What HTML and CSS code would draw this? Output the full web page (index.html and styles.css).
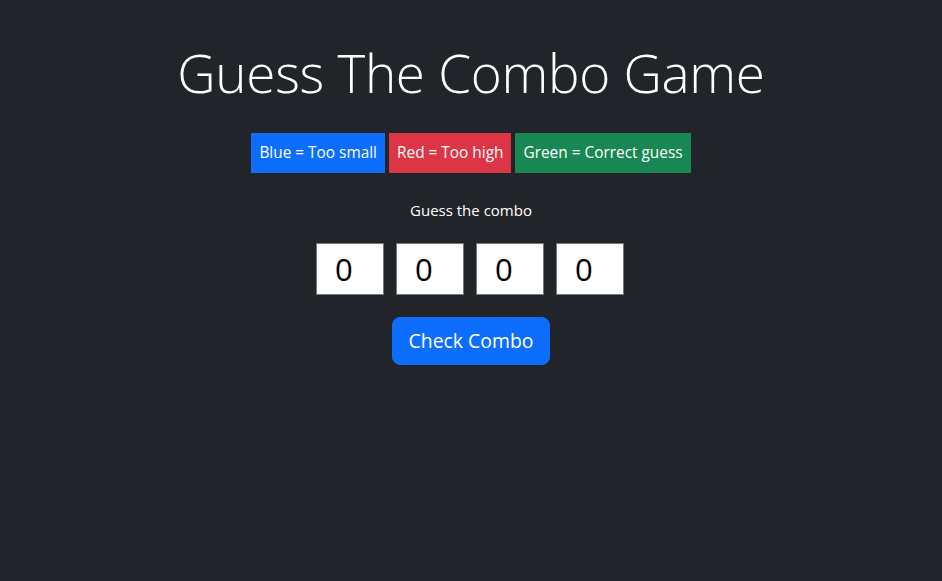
FILE: index.html
```html
<!DOCTYPE html>
<html lang="en">
<head>
<meta charset="utf-8">
<title>Guess The Combo Game</title>
<link rel="stylesheet" href="styles.css">
</head>
<body>
<main class="game">
  <h1 class="title">Guess The Combo Game</h1>
  <div class="legend">
    <span class="badge badge-blue">Blue = Too small</span>
    <span class="badge badge-red">Red = Too high</span>
    <span class="badge badge-green">Green = Correct guess</span>
  </div>
  <p class="prompt">Guess the combo</p>
  <div class="digits">
    <input class="digit" type="text" value="0">
    <input class="digit" type="text" value="0">
    <input class="digit" type="text" value="0">
    <input class="digit" type="text" value="0">
  </div>
  <button class="check" type="button">Check Combo</button>
</main>
</body>
</html>
```

FILE: styles.css
```css
* { box-sizing: border-box; }
html, body {
  margin: 0;
  height: 100%;
  background: #212529;
}
body {
  font-family: "Open Sans", "Noto Sans", sans-serif;
  color: #fff;
}
.game {
  display: flex;
  flex-direction: column;
  align-items: center;
  padding-top: 39px;
}
.title {
  margin: 0;
  font-size: 53px;
  font-weight: 300;
  letter-spacing: -0.3px;
  line-height: 67px;
}
.legend {
  display: flex;
  gap: 4px;
  margin-top: 27px;
}
.badge {
  display: block;
  padding: 8px;
  font-size: 15.4px;
  line-height: 24px;
  color: #fff;
}
.badge-blue { background: #0d6efd; }
.badge-red { background: #dc3545; }
.badge-green { background: #198754; }
.prompt {
  margin: 25px 0 0;
  font-size: 15px;
  line-height: 24px;
}
.digits {
  display: flex;
  gap: 12px;
  margin-top: 21px;
  margin-left: -2px;
}
.digit {
  width: 68px;
  height: 52px;
  border: 1px solid #767676;
  background: #fff;
  color: #000;
  font-family: inherit;
  font-size: 31px;
  padding: 0 0 0 18px;
  margin: 0;
}
.check {
  margin-top: 22px;
  height: 48px;
  padding: 8px 16px;
  font-family: inherit;
  font-size: 19.4px;
  line-height: 30px;
  color: #fff;
  background: #0d6efd;
  border: 1px solid #0d6efd;
  border-radius: 8px;
}
```
